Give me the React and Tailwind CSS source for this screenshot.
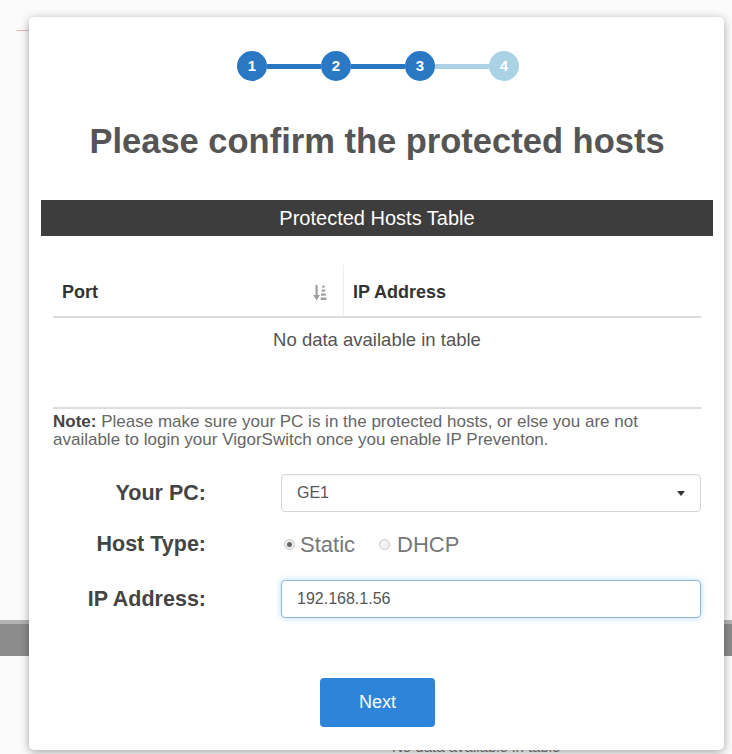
import React from 'react';

const font = { fontFamily: '"Liberation Sans", Arial, sans-serif' };

function Step({ n, active }) {
    return (
        <div
            className={`w-[30px] h-[30px] rounded-full flex items-center justify-center text-white text-[15px] font-bold ${
                active ? 'bg-[#2a78c3]' : 'bg-[#a9d3e4]'
            }`}
        >
            {n}
        </div>
    );
}

function Line({ active }) {
    return <div className={`w-[54px] h-[5px] ${active ? 'bg-[#2a78c3]' : 'bg-[#a9d3e4]'}`} />;
}

function SortIcon() {
    return (
        <svg width="14" height="17" viewBox="0 0 14 17" fill="#a0a0a0">
            <rect x="2.5" y="1" width="2.2" height="12" />
            <path d="M0.2 11 L3.6 16.5 L7 11 Z" />
            <rect x="9.2" y="1.5" width="2.4" height="2.2" />
            <rect x="8.6" y="5.5" width="3.6" height="2.2" />
            <rect x="8" y="9.5" width="4.8" height="2.2" />
            <rect x="7.6" y="13.5" width="5.8" height="2.5" />
        </svg>
    );
}

export default function App() {
    return (
        <div className="relative w-[732px] h-[754px] bg-[#fbfbfb] overflow-hidden" style={font}>
            {/* page behind the dialog */}
            <div className="flex flex-col">
                <div className="h-[30px]" />
                <div className="ml-[17px] w-[14px] h-px bg-[#e7b3b3]" />
                <div className="h-[589px]" />
                <div className="h-[36px] bg-[#8c8c8c] border-t-4 border-[#b3b3b3]" />
                <div className="h-[84px]" />
                <div className="pl-[392px] text-[15px] leading-[14px] text-[#777]">No data available in table</div>
            </div>

            {/* dialog */}
            <div className="absolute left-[29px] top-[17px] w-[695px] h-[733px] bg-white rounded-[5px] shadow-[0_2px_10px_rgba(0,0,0,0.35)] pl-[12px] pr-[11px] pt-[34px] flex flex-col">
                <div className="flex items-center justify-center pl-[2px]">
                    <Step n="1" active />
                    <Line active />
                    <Step n="2" active />
                    <Line active />
                    <Step n="3" active />
                    <Line />
                    <Step n="4" />
                </div>

                <h1 className="mt-[40px] text-center text-[34.5px] leading-[40px] font-bold text-[#555]">
                    Please confirm the protected hosts
                </h1>

                <div className="mt-[39px] h-[36px] bg-[#3d3d3d] flex items-center justify-center text-white text-[20px]">
                    Protected Hosts Table
                </div>

                <div className="mx-[12px] flex flex-col">
                    <div className="mt-[29px] flex border-b-2 border-[#dddddd] text-[18px] font-bold text-[#333]">
                        <div className="w-[290px] h-[51px] flex items-center justify-between pl-[9px] pr-[16px] pt-[4px]">
                            <span>Port</span>
                            <SortIcon />
                        </div>
                        <div className="flex-1 h-[51px] flex items-center pl-[9px] pt-[4px] border-l border-[#eeeeee]">
                            IP Address
                        </div>
                    </div>
                    <div className="h-[44px] flex items-center justify-center text-[18.5px] text-[#555]">
                        No data available in table
                    </div>
                    <div className="mt-[45px] h-[2px] bg-[#dddddd]" />
                </div>

                <p className="mt-[4px] ml-[12px] text-[17px] leading-[18px] text-[#666]">
                    <span className="font-bold text-[#444]">Note:</span> Please make sure your PC is in the protected hosts, or else you are not
                    <br />
                    available to login your VigorSwitch once you enable IP Preventon.
                </p>

                <div className="ml-[12px] mr-[12px] mt-[25px] grid grid-cols-[153px_1fr] gap-x-[75px] items-center">
                    <label className="text-right text-[21.5px] font-bold text-[#444]">Your PC:</label>
                    <div className="h-[38px] rounded-[4px] border border-[#d6d6d6] bg-white flex items-center justify-between pl-[15px] pr-[15px] text-[16px] text-[#555] shadow-[inset_0_1px_1px_rgba(0,0,0,0.05)]">
                        <span>GE1</span>
                        <svg width="8" height="5" viewBox="0 0 8 5">
                            <path d="M0 0 L8 0 L4 5 Z" fill="#333" />
                        </svg>
                    </div>

                    <label className="mt-[13px] text-right text-[21.5px] font-bold text-[#444] h-[38px] flex items-center justify-end">
                        Host Type:
                    </label>
                    <div className="mt-[13px] h-[38px] flex items-center text-[22px] text-[#777] pl-[3px]">
                        <span className="w-[11px] h-[11px] rounded-full border border-[#c8c8c8] bg-[#eeeeee] flex items-center justify-center">
                            <span className="w-[5px] h-[5px] rounded-full bg-[#666]" />
                        </span>
                        <span className="ml-[5px]">Static</span>
                        <span className="ml-[24px] w-[11px] h-[11px] rounded-full border border-[#c8c8c8] bg-[#f2f2f2]" />
                        <span className="ml-[7px]">DHCP</span>
                    </div>

                    <label className="mt-[17px] text-right text-[21.5px] font-bold text-[#444]">IP Address:</label>
                    <div className="mt-[17px] h-[38px] rounded-[4px] border border-[#8ab8dc] bg-white flex items-center pl-[15px] text-[16px] text-[#555] shadow-[0_0_6px_rgba(102,175,233,0.45)]">
                        192.168.1.56
                    </div>
                </div>

                <div className="mt-[60px] flex justify-center pl-[1px]">
                    <button className="w-[115px] h-[49px] rounded-[4px] bg-[#2e84d8] text-white text-[18px]">
                        Next
                    </button>
                </div>
            </div>
        </div>
    );
}
